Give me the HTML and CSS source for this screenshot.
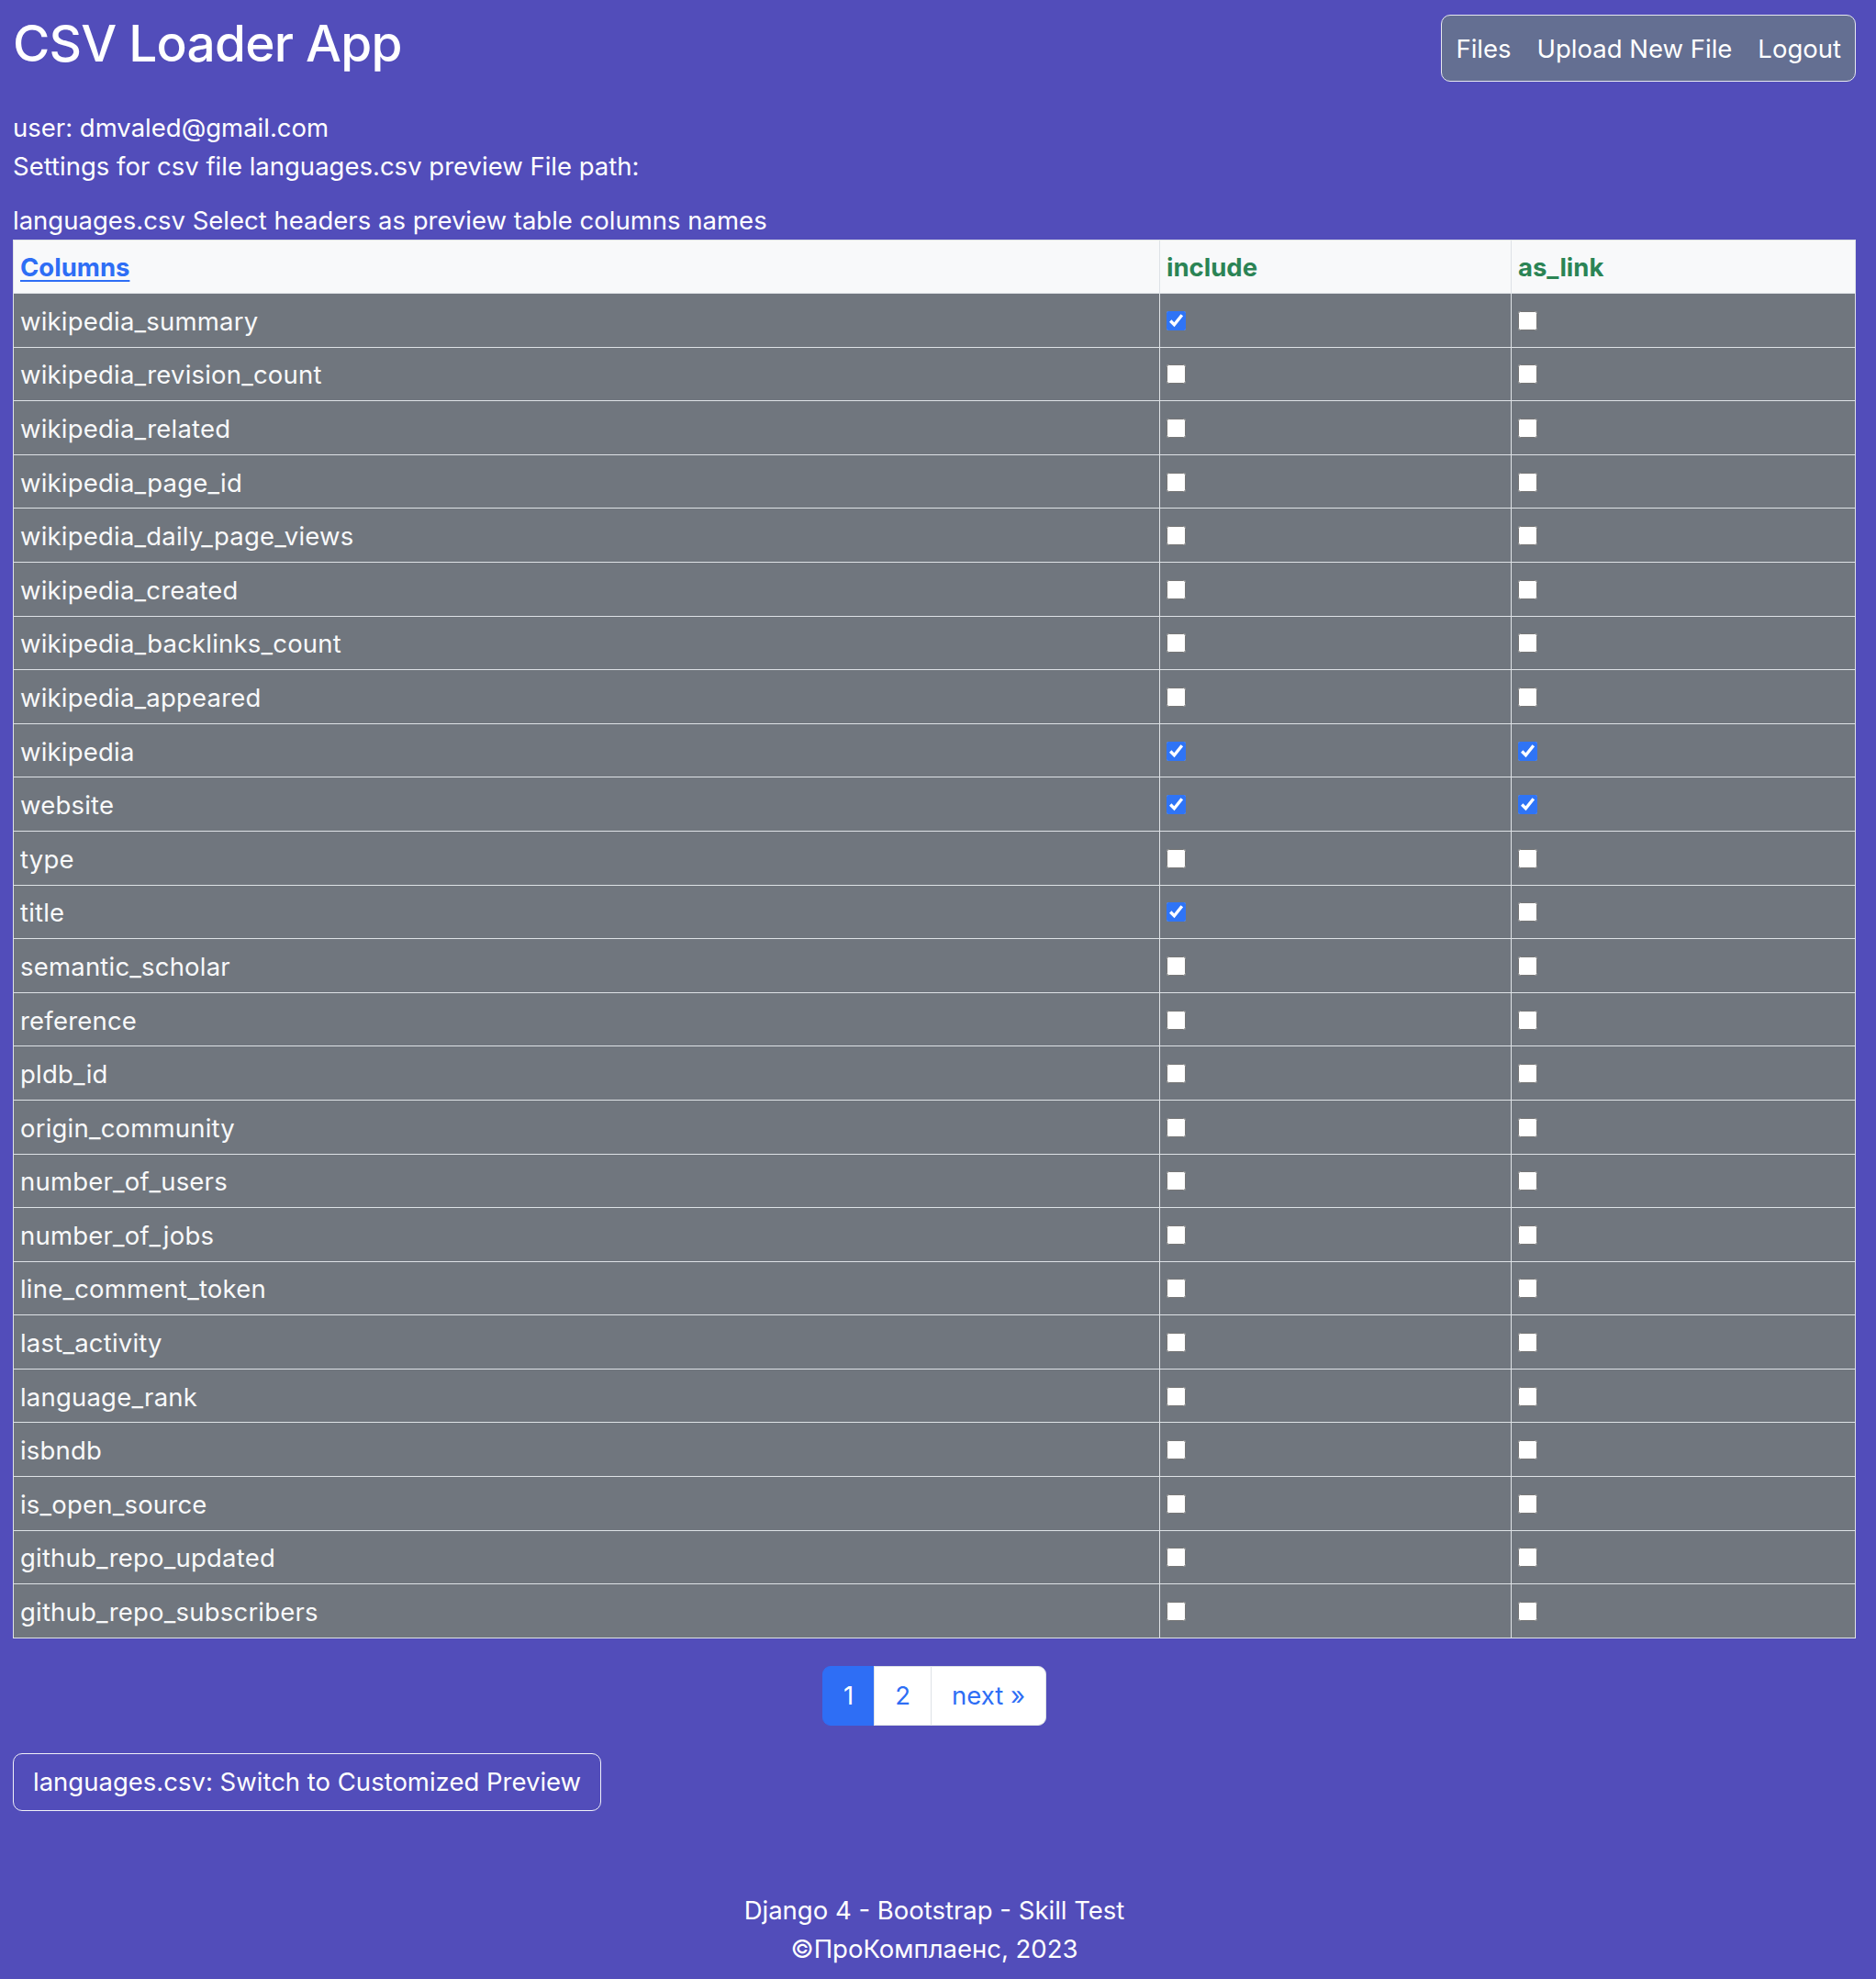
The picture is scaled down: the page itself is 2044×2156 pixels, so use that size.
FILE: index.html
```html
<!DOCTYPE html>
<html lang="en">
<head>
<meta charset="utf-8">
<title>CSV Loader App</title>
<link rel="stylesheet" href="styles.css">
</head>
<body>
<div class="page">
  <header class="topbar">
    <h1 class="brand">CSV Loader App</h1>
    <nav class="nav-box">
      <a href="#" class="nav-link">Files</a>
      <a href="#" class="nav-link">Upload New File</a>
      <a href="#" class="nav-link">Logout</a>
    </nav>
  </header>

  <main class="content">
    <p class="line user">user: dmvaled@gmail.com</p>
    <p class="line">Settings for csv file languages.csv preview File path:</p>
    <p class="line spaced">languages.csv Select headers as preview table columns names</p>

    <table class="cols-table">
      <thead>
        <tr>
          <th class="c-name"><a href="#" class="head-link">Columns</a></th>
          <th class="c-inc green">include</th>
          <th class="c-link green">as_link</th>
        </tr>
      </thead>
      <tbody>
        <tr><td>wikipedia_summary</td><td><input type="checkbox" checked></td><td><input type="checkbox"></td></tr>
        <tr><td>wikipedia_revision_count</td><td><input type="checkbox"></td><td><input type="checkbox"></td></tr>
        <tr><td>wikipedia_related</td><td><input type="checkbox"></td><td><input type="checkbox"></td></tr>
        <tr><td>wikipedia_page_id</td><td><input type="checkbox"></td><td><input type="checkbox"></td></tr>
        <tr><td>wikipedia_daily_page_views</td><td><input type="checkbox"></td><td><input type="checkbox"></td></tr>
        <tr><td>wikipedia_created</td><td><input type="checkbox"></td><td><input type="checkbox"></td></tr>
        <tr><td>wikipedia_backlinks_count</td><td><input type="checkbox"></td><td><input type="checkbox"></td></tr>
        <tr><td>wikipedia_appeared</td><td><input type="checkbox"></td><td><input type="checkbox"></td></tr>
        <tr><td>wikipedia</td><td><input type="checkbox" checked></td><td><input type="checkbox" checked></td></tr>
        <tr><td>website</td><td><input type="checkbox" checked></td><td><input type="checkbox" checked></td></tr>
        <tr><td>type</td><td><input type="checkbox"></td><td><input type="checkbox"></td></tr>
        <tr><td>title</td><td><input type="checkbox" checked></td><td><input type="checkbox"></td></tr>
        <tr><td>semantic_scholar</td><td><input type="checkbox"></td><td><input type="checkbox"></td></tr>
        <tr><td>reference</td><td><input type="checkbox"></td><td><input type="checkbox"></td></tr>
        <tr><td>pldb_id</td><td><input type="checkbox"></td><td><input type="checkbox"></td></tr>
        <tr><td>origin_community</td><td><input type="checkbox"></td><td><input type="checkbox"></td></tr>
        <tr><td>number_of_users</td><td><input type="checkbox"></td><td><input type="checkbox"></td></tr>
        <tr><td>number_of_jobs</td><td><input type="checkbox"></td><td><input type="checkbox"></td></tr>
        <tr><td>line_comment_token</td><td><input type="checkbox"></td><td><input type="checkbox"></td></tr>
        <tr><td>last_activity</td><td><input type="checkbox"></td><td><input type="checkbox"></td></tr>
        <tr><td>language_rank</td><td><input type="checkbox"></td><td><input type="checkbox"></td></tr>
        <tr><td>isbndb</td><td><input type="checkbox"></td><td><input type="checkbox"></td></tr>
        <tr><td>is_open_source</td><td><input type="checkbox"></td><td><input type="checkbox"></td></tr>
        <tr><td>github_repo_updated</td><td><input type="checkbox"></td><td><input type="checkbox"></td></tr>
        <tr><td>github_repo_subscribers</td><td><input type="checkbox"></td><td><input type="checkbox"></td></tr>
      </tbody>
    </table>

    <nav class="pager-wrap">
      <ul class="pager">
        <li class="page-item active"><a href="#" class="page-link">1</a></li>
        <li class="page-item"><a href="#" class="page-link">2</a></li>
        <li class="page-item"><a href="#" class="page-link">next &raquo;</a></li>
      </ul>
    </nav>

    <button type="button" class="btn-outline">languages.csv: Switch to Customized Preview</button>
  </main>

  <footer class="footer">
    <p>Django 4 - Bootstrap - Skill Test</p>
    <p>&copy;ПроКомплаенс, 2023</p>
  </footer>
</div>
</body>
</html>
```

FILE: styles.css
```css
* { box-sizing: border-box; }

html, body {
  margin: 0;
  padding: 0;
  background: #524dba;
}

body {
  font-family: Inter, "Noto Sans", "Noto Sans CJK SC", sans-serif;
  color: #ffffff;
  font-size: 27.5px;
  line-height: 42px;
}

.page {
  padding: 0 22px 0 14px;
  min-height: 2156px;
}

.topbar {
  display: flex;
  justify-content: space-between;
  align-items: flex-start;
}

.brand {
  margin: 14px 0 0 0;
  font-size: 55px;
  line-height: 66px;
  font-weight: 500;
  letter-spacing: -0.8px;
}

.nav-box {
  margin-top: 16px;
  display: flex;
  gap: 28px;
  padding: 15px 15px 14px 15px;
  background: #646f92;
  border: 1px solid #e6e8ef;
  border-radius: 10px;
  line-height: 42px;
}

.nav-link {
  color: #ffffff;
  text-decoration: none;
}

.content {
  margin-top: 29px;
}

.line {
  margin: 0;
}

.line.spaced {
  margin-top: 17px;
}

.cols-table {
  width: 100%;
  border-collapse: separate;
  border-spacing: 0;
  border-top: 1px solid #dee2e6;
  border-left: 1px solid #dee2e6;
}

.cols-table th,
.cols-table td {
  border-right: 1px solid #dee2e6;
  border-bottom: 1px solid #dee2e6;
  padding: 0 7px;
  text-align: left;
  vertical-align: middle;
}

.cols-table th {
  background: #f8f9fa;
  height: 58px;
  font-weight: 700;
}

.cols-table td {
  background: #70767e;
  color: #f8f9fa;
  height: 58.6px;
  letter-spacing: 0.2px;
  padding-top: 2px;
}

.c-name { width: 1249px; }
.c-inc { width: 383px; }

.head-link {
  color: #2e6ef5;
  text-decoration: underline;
  text-underline-offset: 4px;
}

.green { color: #2b8455; }

.cols-table input[type="checkbox"] {
  width: 21px;
  height: 21px;
  margin: 0;
  vertical-align: middle;
  position: relative;
  top: -3px;
  accent-color: #2f74f5;
}

.pager-wrap {
  display: flex;
  justify-content: center;
  margin-top: 30px;
}

.pager {
  display: flex;
  list-style: none;
  margin: 0;
  padding: 0;
}

.page-link {
  display: block;
  padding: 11px 22px;
  line-height: 41px;
  background: #ffffff;
  color: #2e6ef5;
  text-decoration: none;
  border: 1px solid #dee2e6;
  margin-left: -1px;
}

.page-item:first-child .page-link {
  margin-left: 0;
  border-radius: 9px 0 0 9px;
}

.page-item:last-child .page-link {
  border-radius: 0 9px 9px 0;
}

.page-item.active .page-link {
  background: #2e6ef5;
  border-color: #2e6ef5;
  color: #ffffff;
}

.btn-outline {
  display: block;
  margin-top: 30px;
  font-family: inherit;
  font-size: 27.5px;
  line-height: 41px;
  color: #ffffff;
  background: transparent;
  border: 1px solid #f0f0f8;
  border-radius: 10px;
  padding: 10px 21px;
}

.footer {
  margin-top: 87px;
  text-align: center;
}

.footer p {
  margin: 0;
  line-height: 42px;
}
```
